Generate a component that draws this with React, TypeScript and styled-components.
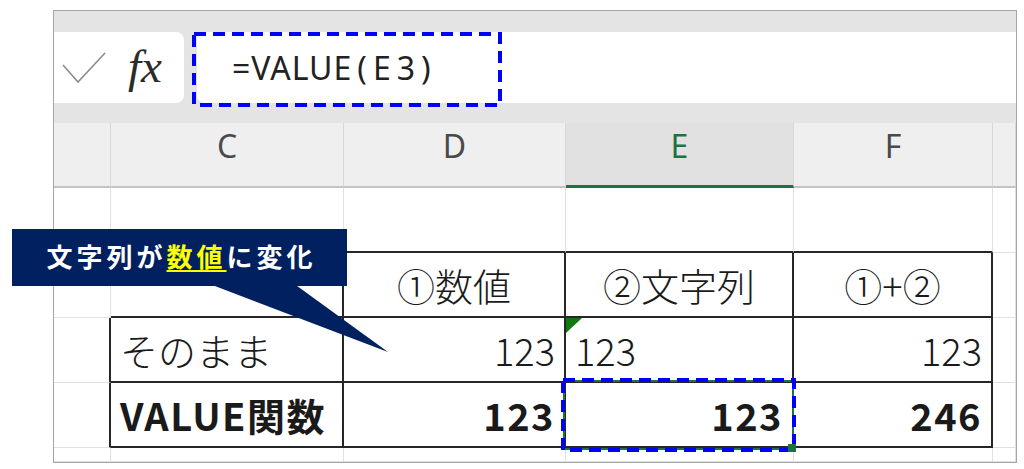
import React from 'react';
import styled, { createGlobalStyle, css } from 'styled-components';

const GlobalStyle = createGlobalStyle`
  html, body {
    margin: 0;
    padding: 0;
    background: #ffffff;
  }
  body {
    font-family: "Noto Sans CJK JP", "Noto Sans", sans-serif;
  }
`;

const COLS = '57px 233px 222px 228px 199px 23px';

const Page = styled.div`
  position: relative;
  width: 1024px;
  height: 469px;
  box-sizing: border-box;
  padding: 10px 0 0 53px;
  overflow: hidden;
`;

const Frame = styled.div`
  width: 964px;
  box-sizing: border-box;
  border: 1px solid #a6a6a6;
  display: flex;
  flex-direction: column;
  background: #ffffff;
`;

const Strip = styled.div<{ $h: number }>`
  height: ${p => p.$h}px;
  background: #e4e4e4;
`;

// 数式バー
const FormulaRow = styled.div`
  position: relative;
  height: 71px;
  display: flex;
  gap: 13px;
  background: #e4e4e4;
`;

const NameBox = styled.div`
  width: 130px;
  background: #ffffff;
  border-radius: 0 8px 8px 0;
  display: flex;
  align-items: center;
  padding-left: 8px;
  box-sizing: border-box;
  gap: 22px;
`;

const Fx = styled.span`
  font-family: "Liberation Serif", "DejaVu Serif", serif;
  font-style: italic;
  font-size: 47px;
  color: #2b2b2b;
  line-height: 1;
  margin-top: -2px;
`;

const FormulaInput = styled.div`
  flex: 1;
  background: #ffffff;
  border-radius: 8px 0 0 8px;
  display: flex;
  align-items: center;
  padding-left: 35px;
  font-family: "Noto Sans", "Liberation Sans", sans-serif;
  font-size: 32px;
  letter-spacing: 1px;
  color: #222222;
`;

const Paren = styled.span`
  letter-spacing: 6px;
  margin-left: 5px;
`;

const Marquee = styled.svg`
  position: absolute;
  z-index: 2;
  overflow: visible;
`;

// 列見出し
const HeaderRow = styled.div`
  display: grid;
  grid-template-columns: ${COLS};
  height: 65px;
  background: #efefef;
`;

const ColHead = styled.div<{ $active?: boolean }>`
  box-sizing: border-box;
  display: flex;
  align-items: center;
  justify-content: center;
  padding-bottom: 18px;
  border-right: 1px solid #d8d8d8;
  border-bottom: 2px solid #c4c4c4;
  font-family: "Noto Sans", "Liberation Sans", sans-serif;
  font-size: 32px;
  color: #4a4a4a;
  ${p =>
    p.$active &&
    css`
      background: #e1e1e1;
      color: #1e7145;
      border-bottom: 3px solid #1e7145;
      padding-bottom: 17px;
    `}
`;

// シート本体
const Sheet = styled.div`
  display: grid;
  grid-template-columns: ${COLS};
  grid-template-rows: 65px 65px 65px 65px 14px;
`;

type Line = 'l' | 'd';

const Cell = styled.div<{ $r: Line; $b: Line; $align?: 'left' | 'center' | 'right'; $bold?: boolean }>`
  box-sizing: border-box;
  position: relative;
  display: flex;
  align-items: center;
  justify-content: ${p => (p.$align === 'right' ? 'flex-end' : p.$align === 'center' ? 'center' : 'flex-start')};
  padding: 0 9px;
  border-right: ${p => (p.$r === 'd' ? '2px solid #262626' : '1px solid #e1e1e1')};
  border-bottom: ${p => (p.$b === 'd' ? '2px solid #262626' : '1px solid #e1e1e1')};
  font-size: 38px;
  font-weight: ${p => (p.$bold ? 700 : 300)};
  letter-spacing: ${p => (p.$bold ? '1.5px' : '0')};
  color: #1a1a1a;
  line-height: 1;
  white-space: nowrap;
`;

const ErrorMark = styled.span`
  position: absolute;
  left: 0;
  top: 0;
  width: 16px;
  height: 15px;
  background: #0f7b0f;
  clip-path: polygon(0 0, 100% 0, 0 100%);
`;

// 吹き出し
const Callout = styled.div`
  position: absolute;
  left: 12px;
  top: 229px;
  width: 335px;
  height: 57px;
  background: #002060;
  display: flex;
  align-items: center;
  justify-content: center;
  padding: 0 0 4px 4px;
  box-sizing: border-box;
  color: #ffffff;
  font-weight: 700;
  font-size: 26px;
  letter-spacing: 4px;
  z-index: 3;
`;

const Hi = styled.span`
  color: #ffff00;
  text-decoration: underline;
  text-underline-offset: 3px;
  text-decoration-thickness: 2px;
`;

const Tail = styled.svg`
  position: absolute;
  left: 200px;
  top: 283px;
  z-index: 3;
`;

type CellDef = { r: Line; b: Line; text?: string; align?: 'left' | 'center' | 'right'; bold?: boolean; mark?: boolean; sel?: boolean };

const rows: CellDef[][] = [
  [
    { r: 'l', b: 'l' },
    { r: 'l', b: 'l' },
    { r: 'l', b: 'd' },
    { r: 'l', b: 'd' },
    { r: 'l', b: 'd' },
    { r: 'l', b: 'l' },
  ],
  [
    { r: 'l', b: 'l' },
    { r: 'd', b: 'd' },
    { r: 'd', b: 'd', text: '①数値', align: 'center' },
    { r: 'd', b: 'd', text: '②文字列', align: 'center' },
    { r: 'd', b: 'd', text: '①+②', align: 'center' },
    { r: 'l', b: 'l' },
  ],
  [
    { r: 'd', b: 'l' },
    { r: 'd', b: 'd', text: 'そのまま' },
    { r: 'd', b: 'd', text: '123', align: 'right' },
    { r: 'd', b: 'd', text: '123', mark: true },
    { r: 'd', b: 'd', text: '123', align: 'right' },
    { r: 'l', b: 'l' },
  ],
  [
    { r: 'd', b: 'l' },
    { r: 'd', b: 'd', text: 'VALUE関数', bold: true },
    { r: 'd', b: 'd', text: '123', align: 'right', bold: true },
    { r: 'd', b: 'd', text: '123', align: 'right', bold: true, sel: true },
    { r: 'd', b: 'd', text: '246', align: 'right', bold: true },
    { r: 'l', b: 'l' },
  ],
  [
    { r: 'l', b: 'l' },
    { r: 'l', b: 'l' },
    { r: 'l', b: 'l' },
    { r: 'l', b: 'l' },
    { r: 'l', b: 'l' },
    { r: 'l', b: 'l' },
  ],
];

const Selection: React.FC = () => (
  <Marquee width={235} height={74} style={{ left: -5, top: -5 }}>
    <rect x={3} y={3} width={229} height={68} fill="none" stroke="#1e7145" strokeWidth={2} />
    <rect x={2} y={2} width={231} height={70} fill="none" stroke="#0000ff" strokeWidth={4} strokeDasharray="12 7" />
    <rect x={227} y={66} width={8} height={8} fill="#1e7145" />
  </Marquee>
);

const App: React.FC = () => {
  return (
    <Page>
      <GlobalStyle />
      <Frame>
        <Strip $h={21} />
        <FormulaRow>
          <NameBox>
            <svg width="44" height="32" viewBox="0 0 44 32">
              <polyline points="1,13 16,30 43,1" fill="none" stroke="#8c8c8c" strokeWidth="1.6" />
            </svg>
            <Fx>fx</Fx>
          </NameBox>
          <FormulaInput>
            =VALUE<Paren>(E3)</Paren>
          </FormulaInput>
          {/* 数式バーの青い点線 */}
          <Marquee width={310} height={75} style={{ left: 138, top: 0 }}>
            <rect x={2} y={2} width={306} height={71} fill="none" stroke="#0000ff" strokeWidth={4} strokeDasharray="12 7" />
          </Marquee>
        </FormulaRow>
        <Strip $h={20} />
        <HeaderRow>
          <ColHead />
          <ColHead>C</ColHead>
          <ColHead>D</ColHead>
          <ColHead $active>E</ColHead>
          <ColHead>F</ColHead>
          <ColHead />
        </HeaderRow>
        <Sheet>
          {rows.map((row, ri) =>
            row.map((c, ci) => (
              <Cell key={`${ri}-${ci}`} $r={c.r} $b={c.b} $align={c.align} $bold={c.bold}>
                {c.mark && <ErrorMark />}
                {c.text}
                {c.sel && <Selection />}
              </Cell>
            ))
          )}
        </Sheet>
      </Frame>

      <Callout>
        文字列が<Hi>数値</Hi>に変化
      </Callout>
      <Tail width={200} height={72} viewBox="0 0 200 72">
        <polygon points="7,0 93,0 188,69" fill="#002060" />
      </Tail>
    </Page>
  );
};

export default App;
